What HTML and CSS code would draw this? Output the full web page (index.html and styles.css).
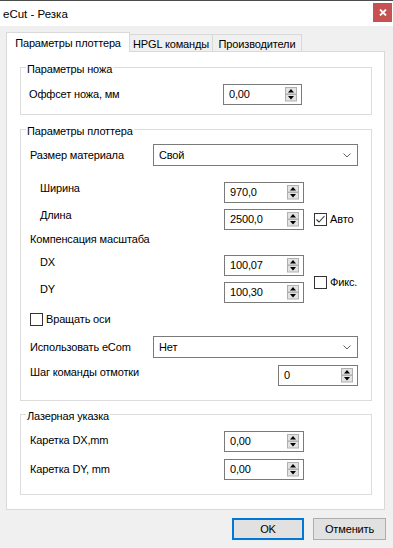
FILE: index.html
```html
<!DOCTYPE html>
<html lang="ru">
<head>
    <meta charset="UTF-8">
    <title>eCut - Резка</title>
    <link rel="stylesheet" href="styles.css">
</head>
<body>
    <div class="titlebar">
        <span class="title">eCut - Резка</span>
        <div class="close">
            <svg width="8" height="7" viewBox="0 0 8 7"><path d="M1 0.5 L7 6.5 M7 0.5 L1 6.5" stroke="#fff" stroke-width="1.8"/></svg>
        </div>
    </div>

    <div class="tabs">
        <div class="tab active tab-1">Параметры плоттера</div>
        <div class="tab tab-2">HPGL команды</div>
        <div class="tab tab-3">Производители</div>
    </div>

    <div class="panel">
        <!-- Параметры ножа -->
        <div class="group g-knife">
            <div class="group-title">Параметры ножа</div>
            <div class="row r-offset">
                <span class="label w-knife">Оффсет ножа, мм</span>
                <div class="spin spin-knife"><span class="spin-value">0,00</span><span class="arrows"></span></div>
            </div>
        </div>

        <!-- Параметры плоттера -->
        <div class="group g-plotter">
            <div class="group-title">Параметры плоттера</div>
            <div class="row r-size">
                <span class="label w-combo">Размер материала</span>
                <div class="combo"><span>Свой</span><span class="chevron"></span></div>
            </div>
            <div class="row sub r-width">
                <span class="label w-sub up4">Ширина</span>
                <div class="spin"><span class="spin-value">970,0</span><span class="arrows"></span></div>
            </div>
            <div class="row sub r-length">
                <span class="label w-sub up4">Длина</span>
                <div class="spin"><span class="spin-value">2500,0</span><span class="arrows"></span></div>
                <label class="check check-side"><span class="box checked"></span>Авто</label>
            </div>
            <div class="row r-comp">
                <span class="label">Компенсация масштаба</span>
            </div>
            <div class="pair">
                <div class="pair-rows">
                    <div class="row sub r-dx">
                        <span class="label w-sub up3">DX</span>
                        <div class="spin"><span class="spin-value">100,07</span><span class="arrows"></span></div>
                    </div>
                    <div class="row sub r-dy">
                        <span class="label w-sub up3">DY</span>
                        <div class="spin"><span class="spin-value">100,30</span><span class="arrows"></span></div>
                    </div>
                </div>
                <label class="check check-side check-fix"><span class="box"></span>Фикс.</label>
            </div>
            <div class="row r-rotate">
                <label class="check"><span class="box"></span>Вращать оси</label>
            </div>
            <div class="row r-ecom">
                <span class="label w-combo">Использовать eCom</span>
                <div class="combo"><span>Нет</span><span class="chevron"></span></div>
            </div>
            <div class="row r-step">
                <span class="label w-step up3">Шаг команды отмотки</span>
                <div class="spin"><span class="spin-value">0</span><span class="arrows"></span></div>
            </div>
        </div>

        <!-- Лазерная указка -->
        <div class="group g-laser">
            <div class="group-title">Лазерная указка</div>
            <div class="row r-ldx">
                <span class="label w-laser up1">Каретка DX,mm</span>
                <div class="spin"><span class="spin-value">0,00</span><span class="arrows"></span></div>
            </div>
            <div class="row r-ldy">
                <span class="label w-laser">Каретка DY, mm</span>
                <div class="spin"><span class="spin-value">0,00</span><span class="arrows"></span></div>
            </div>
        </div>
    </div>

    <div class="buttons">
        <button class="btn btn-ok">OK</button>
        <button class="btn">Отменить</button>
    </div>
</body>
</html>
```

FILE: styles.css
```css
body {
    margin: 0;
    width: 393px;
    height: 548px;
    overflow: hidden;
    background: #f0f0f0;
    font-family: 'Liberation Sans', Arial, sans-serif;
    font-size: 11px;
    letter-spacing: -0.15px;
    color: #000;
}

/* окно */
.titlebar {
    height: 25px;
    border-top: 1px solid #4d4d4d;
    background: #fff;
    display: flex;
    justify-content: space-between;
    align-items: flex-start;
}
.title {
    margin: 6px 0 0 3px;
    font-size: 11.5px;
    letter-spacing: 0;
    line-height: 14px;
}
.close {
    width: 19px;
    height: 19px;
    margin: 2px 1px 0 0;
    background: #c75050;
    display: flex;
    align-items: center;
    justify-content: center;
}

/* вкладки */
.tabs {
    display: flex;
    align-items: flex-end;
    margin: 6px 0 0 6px;
}
.tab {
    box-sizing: border-box;
    height: 17px;
    padding-top: 2px;
    line-height: 14px;
    text-align: center;
    border: 1px solid #d9d9d9;
    border-bottom: none;
    background: #f0f0f0;
    margin-left: -1px;
}
.tab.active {
    height: 20px;
    padding-top: 3px;
    margin: 0 0 -1px 0;
    background: #fff;
    position: relative;
    z-index: 1;
}
.tab-1 { width: 124px; }
.tab-2 { width: 84px; }
.tab-3 { width: 90px; }

.panel {
    box-sizing: border-box;
    height: 459px;
    margin: 0 8px 0 6px;
    padding: 15px 12px 0 13px;
    border: 1px solid #d9d9d9;
    background: #fff;
}

/* группы */
.group {
    border: 1px solid #dcdcdc;
}
.group-title {
    width: max-content;
    margin: -5px 0 0 5px;
    padding: 0 1px;
    line-height: 13px;
    background: #fff;
}
.g-knife { padding-bottom: 9px; }
.g-plotter { margin-top: 14px; padding-bottom: 14px; }
.g-laser { margin-top: 13px; padding-bottom: 14px; }

.row {
    display: flex;
    align-items: center;
    height: 21px;
    padding-left: 9px;
}
.row.sub { padding-left: 19px; }
.label { line-height: 13px; white-space: nowrap; }
.up1 { margin-bottom: 3px; }
.up3 { margin-bottom: 6px; }
.up4 { margin-bottom: 8px; }

.w-knife { width: 194px; }
.w-combo { width: 123px; }
.w-sub { width: 184px; }
.w-step { width: 248px; }
.w-laser { width: 194px; }

.r-offset { margin-top: 8px; padding-left: 8px; }
.r-size { margin-top: 6px; height: 22px; }
.r-width { margin-top: 16px; }
.r-length { margin-top: 6px; }
.r-comp { margin-top: 3px; height: 13px; }
.pair { display: flex; margin-top: 9px; }
.r-dy { margin-top: 6px; }
.r-rotate { margin-top: 10px; height: 13px; }
.r-ecom { margin-top: 10px; height: 22px; }
.r-step { margin-top: 7px; }
.r-ldx { margin-top: 8px; }
.r-ldy { margin-top: 7px; }

/* поля со стрелками */
.spin {
    box-sizing: border-box;
    width: 80px;
    height: 21px;
    border: 1px solid #7a7a7a;
    background: #fff;
    display: flex;
    align-items: center;
    justify-content: space-between;
    padding: 0 4px 0 5px;
}
.spin-knife { width: 79px; }
.spin-value { line-height: 13px; margin-bottom: 1px; }
.arrows {
    width: 12px;
    height: 15px;
    background: url("data:image/svg+xml;utf8,<svg xmlns='http://www.w3.org/2000/svg' width='12' height='15'><rect x='0.5' y='0.5' width='11' height='6.5' fill='%23e3e3e3' stroke='%23b0b0b0'/><rect x='0.5' y='7.5' width='11' height='6.5' fill='%23e3e3e3' stroke='%23b0b0b0'/><path d='M6 2 L9 5.5 L3 5.5 Z' fill='%23000'/><path d='M3 9 L9 9 L6 12.5 Z' fill='%23000'/></svg>") no-repeat;
}

.combo {
    box-sizing: border-box;
    width: 205px;
    height: 22px;
    border: 1px solid #7a7a7a;
    background: #fff;
    display: flex;
    align-items: center;
    justify-content: space-between;
    padding: 0 6px 0 5px;
    line-height: 13px;
}
.chevron {
    width: 8px;
    height: 5px;
    background: url("data:image/svg+xml;utf8,<svg xmlns='http://www.w3.org/2000/svg' width='8' height='5'><path d='M0.5 0.5 L4 4 L7.5 0.5' fill='none' stroke='%23606060'/></svg>") no-repeat;
}

/* флажки */
.check {
    display: flex;
    align-items: center;
    gap: 3px;
    line-height: 13px;
}
.check-side { margin-left: 10px; }
.check-fix { align-self: flex-start; margin-top: 21px; }
.box {
    box-sizing: border-box;
    width: 13px;
    height: 13px;
    border: 1px solid #333;
    background: #fff;
}
.box.checked {
    background: #fff url("data:image/svg+xml;utf8,<svg xmlns='http://www.w3.org/2000/svg' width='11' height='11'><path d='M1.5 5.5 L4 8 L9.5 2' fill='none' stroke='%23333' stroke-width='1.1'/></svg>") no-repeat;
}

/* кнопки */
.buttons {
    display: flex;
    justify-content: flex-end;
    gap: 9px;
    margin: 8px 7px 0 0;
}
.btn {
    box-sizing: border-box;
    width: 73px;
    height: 22px;
    padding: 0;
    border: 1px solid #adadad;
    background: #e1e1e1;
    font-family: 'Liberation Sans', Arial, sans-serif;
    font-size: 11px;
    letter-spacing: -0.15px;
    color: #000;
}
.btn-ok {
    width: 72px;
    border: 2px solid #0078d7;
}
```
